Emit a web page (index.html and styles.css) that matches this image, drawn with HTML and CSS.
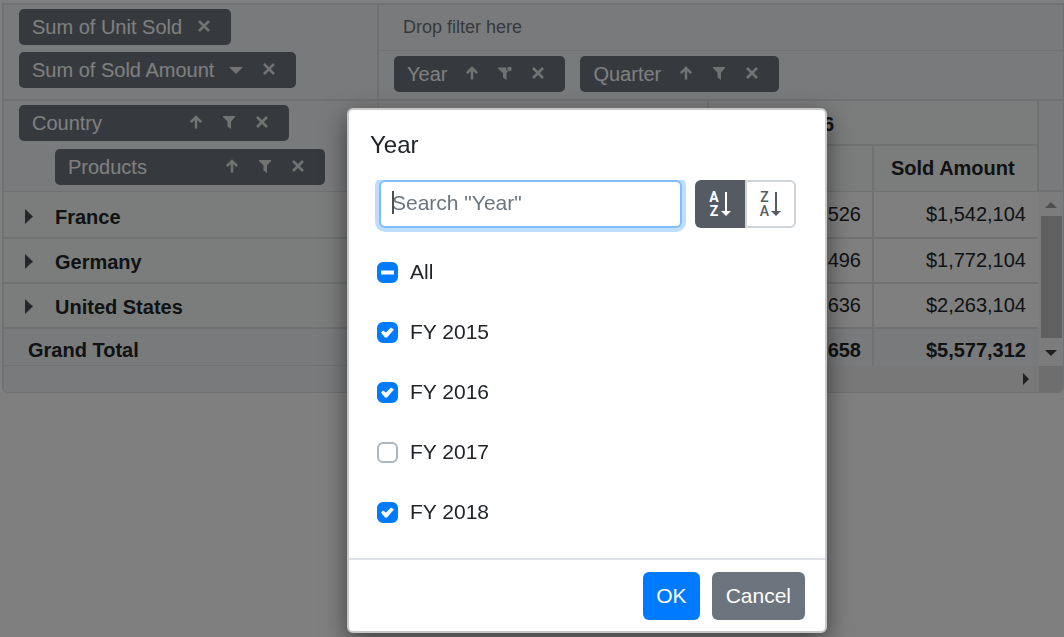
FILE: index.html
```html
<!DOCTYPE html>
<html lang="en">
<head>
    <meta charset="UTF-8">
    <meta name="viewport" content="width=device-width, initial-scale=1.0">
    <title>Pivot Table</title>
    <link rel="stylesheet" href="styles.css">
</head>
<body>
    <!-- ICONS -->
    <svg class="sprite" aria-hidden="true">
        <symbol id="i-close" viewBox="0 0 14 14"><path d="M2 2l10 10M12 2L2 12" fill="none" stroke="currentColor" stroke-width="2.6"/></symbol>
        <symbol id="i-up" viewBox="0 0 14 14"><path d="M7 13.500V2.500M1.800 7.200L7 2l5.200 5.200" fill="none" stroke="currentColor" stroke-width="2.500"/></symbol>
        <symbol id="i-filter" viewBox="0 0 14 14"><path d="M1 1h12v1L9 6.500V14L5.500 11.500V6.500L1 2z" fill="currentColor"/></symbol>
        <symbol id="i-filtered" viewBox="0 0 14 14"><path d="M0 1.500h8.500a2.800 2.800 0 0 0 1.500 4L8.500 7v7L5 11.500V7L0 2.500z" fill="currentColor"/><circle cx="11.500" cy="3" r="2.200" fill="currentColor"/></symbol>
        <symbol id="i-down" viewBox="0 0 14 14"><path d="M0 5h14L7 12z" fill="currentColor"/></symbol>
        <symbol id="i-expand" viewBox="0 0 8 15"><path d="M0 0v15l8-7.500z" fill="currentColor"/></symbol>
        <symbol id="i-sort" viewBox="0 0 10 24"><path d="M5 0v19" stroke="currentColor" stroke-width="2"/><path d="M0 19h10L5 24z" fill="currentColor"/></symbol>
    </svg>

    <main class="pivot">
        <!-- FIELD AREAS -->
        <div class="fields">
            <div class="value-fields">
                <div class="chip">Sum of Unit Sold
                    <span class="chip-actions">
                        <button aria-label="Remove"><svg><use href="#i-close"/></svg></button>
                    </span>
                </div>
                <div class="chip">Sum of Sold Amount
                    <span class="chip-actions">
                        <button aria-label="Options"><svg><use href="#i-down"/></svg></button>
                        <button aria-label="Remove"><svg><use href="#i-close"/></svg></button>
                    </span>
                </div>
            </div>
            <div class="right-fields">
                <div class="filter-fields">Drop filter here</div>
                <div class="column-fields">
                    <div class="chip">Year
                        <span class="chip-actions">
                            <button aria-label="Sort"><svg><use href="#i-up"/></svg></button>
                            <button aria-label="Filter"><svg><use href="#i-filtered"/></svg></button>
                            <button aria-label="Remove"><svg><use href="#i-close"/></svg></button>
                        </span>
                    </div>
                    <div class="chip">Quarter
                        <span class="chip-actions">
                            <button aria-label="Sort"><svg><use href="#i-up"/></svg></button>
                            <button aria-label="Filter"><svg><use href="#i-filter"/></svg></button>
                            <button aria-label="Remove"><svg><use href="#i-close"/></svg></button>
                        </span>
                    </div>
                </div>
            </div>
        </div>

        <!-- DATA -->
        <div class="grid">
            <table>
                <colgroup>
                    <col class="label-col"><col><col><col><col>
                </colgroup>
                <thead>
                    <tr class="years">
                        <td rowspan="2" class="row-fields">
                            <div class="chip wide">Country
                                <span class="chip-actions">
                                    <button aria-label="Sort"><svg><use href="#i-up"/></svg></button>
                                    <button aria-label="Filter"><svg><use href="#i-filter"/></svg></button>
                                    <button aria-label="Remove"><svg><use href="#i-close"/></svg></button>
                                </span>
                            </div>
                            <div class="chip wide nested">Products
                                <span class="chip-actions">
                                    <button aria-label="Sort"><svg><use href="#i-up"/></svg></button>
                                    <button aria-label="Filter"><svg><use href="#i-filter"/></svg></button>
                                    <button aria-label="Remove"><svg><use href="#i-close"/></svg></button>
                                </span>
                            </div>
                        </td>
                        <th colspan="2"></th>
                        <th colspan="2" scope="colgroup">FY 2016</th>
                    </tr>
                    <tr class="measures">
                        <th></th>
                        <th></th>
                        <th></th>
                        <th scope="col">Sold Amount</th>
                    </tr>
                </thead>
                <tbody>
                    <tr class="first">
                        <th scope="row"><svg><use href="#i-expand"/></svg>France</th>
                        <td></td><td></td><td>526</td><td>$1,542,104</td>
                    </tr>
                    <tr>
                        <th scope="row"><svg><use href="#i-expand"/></svg>Germany</th>
                        <td></td><td></td><td>496</td><td>$1,772,104</td>
                    </tr>
                    <tr>
                        <th scope="row"><svg><use href="#i-expand"/></svg>United States</th>
                        <td></td><td></td><td>636</td><td>$2,263,104</td>
                    </tr>
                    <tr class="total">
                        <th scope="row">Grand Total</th>
                        <td></td><td></td><td>658</td><td>$5,577,312</td>
                    </tr>
                </tbody>
            </table>
            <div class="side">
                <div class="side-head"></div>
                <div class="scroll-y">
                    <div class="arrow-up"></div>
                    <div class="thumb"></div>
                    <div class="arrow-down"></div>
                </div>
            </div>
        </div>
        <div class="bottom">
            <div class="bottom-label"></div>
            <div class="scroll-x"><div class="arrow-right"></div></div>
            <div class="corner"></div>
        </div>
    </main>

    <div class="overlay"></div>

    <!-- MEMBER FILTER DIALOG -->
    <div class="dialog" role="dialog" aria-modal="true" aria-labelledby="dialogTitle">
        <h2 id="dialogTitle">Year</h2>
        <div class="dialog-body">
            <div class="search-row">
                <div class="search">
                    <input type="text" placeholder='Search "Year"' aria-label="Search Year">
                </div>
                <div class="sort-group">
                    <button class="active" aria-label="Sort ascending">
                        <span class="letters"><span>A</span><span>Z</span></span><svg><use href="#i-sort"/></svg>
                    </button>
                    <button aria-label="Sort descending">
                        <span class="letters"><span>Z</span><span>A</span></span><svg><use href="#i-sort"/></svg>
                    </button>
                </div>
            </div>
            <div class="members">
                <label><input type="checkbox" class="mixed">All</label>
                <label><input type="checkbox" checked>FY 2015</label>
                <label><input type="checkbox" checked>FY 2016</label>
                <label><input type="checkbox">FY 2017</label>
                <label><input type="checkbox" checked>FY 2018</label>
            </div>
        </div>
        <div class="dialog-footer">
            <button class="btn primary">OK</button>
            <button class="btn">Cancel</button>
        </div>
    </div>
</body>
</html>
```
FILE: styles.css
```css
* { box-sizing: border-box; }
body {
    margin: 0;
    font-family: "Liberation Sans", Arial, sans-serif;
    font-size: 20px;
    line-height: 24px;
    color: #212529;
    background: #fff;
    min-height: 100vh;
}
button { font: inherit; cursor: pointer; }
.sprite { display: none; }

/* Pivot */
.pivot {
    margin: 3px 0 0 2px;
    border: 2px solid #dee2e6;
    border-width: 2px 1px 1px 2px;
    border-radius: 0 0 6px 6px;
    overflow: hidden;
}
.fields {
    display: grid;
    grid-template-columns: 375px 1fr;
    background: #f3f4f7;
    border-bottom: 2px solid #dee2e6;
}
.value-fields {
    display: flex;
    flex-direction: column;
    align-items: flex-start;
    gap: 7px;
    padding: 4px 15px 11px;
    border-right: 2px solid #dee2e6;
}
.filter-fields {
    height: 46px;
    padding: 10px 24px;
    font-size: 18px;
    color: #6c757d;
    border-bottom: 1px solid #dee2e6;
}
.column-fields { display: flex; gap: 15px; padding: 5px 15px 0; }

.chip {
    display: inline-flex;
    align-items: center;
    justify-content: space-between;
    gap: 5px;
    height: 36px;
    padding: 0 11px 0 13px;
    border-radius: 5px;
    background: #6c757d;
    color: #fff;
}
.column-fields .chip { gap: 8px; }
.chip.wide { display: flex; width: 270px; }
.chip.nested { margin: 8px 0 0 36px; }
.chip-actions { display: flex; }
.chip-actions button {
    width: 33px;
    height: 36px;
    padding: 0 0 3px;
    border: 0;
    background: none;
    color: #e4e5e7;
}
.chip-actions svg { display: block; width: 14px; height: 14px; margin: 0 auto; }

/* Grid */
.grid { display: flex; }
table {
    flex: 1;
    width: 100%;
    table-layout: fixed;
    border-collapse: separate;
    border-spacing: 0;
}
.label-col { width: 375px; }
th, td {
    padding: 0 11px;
    border: solid #dee2e6;
    border-width: 0 2px 2px 0;
    text-align: right;
}
th { background: #f7faf8; font-weight: bold; }
thead th { text-align: left; padding: 0 0 2px 17px; }
.years { height: 45px; }
.years th { padding: 2px 0 0 50px; }
.measures { height: 46px; }
.measures th { border-bottom-width: 1px; }
.row-fields {
    padding: 4px 15px 6px;
    text-align: left;
    vertical-align: top;
    background: #f3f4f7;
    border-width: 0 1px 1px 0;
}
tbody tr { height: 45px; }
tbody .first { height: 47px; }
tbody td { padding-bottom: 2px; }
tbody th { padding: 2px 0 0 51px; text-align: left; border-right-width: 1px; }
tbody .first th { padding-top: 4px; }
tbody th svg {
    float: left;
    width: 8px;
    height: 15px;
    margin: 4px 0 0 -30px;
    color: #495057;
}
tbody td:last-child { border-right-color: #fff; }
tbody .total { height: 37px; }
.total th, .total td { background: #f1f4f8; border-bottom: 0; font-weight: bold; }
tbody .total td { padding-top: 5px; padding-bottom: 0; }
tbody .total th { padding: 5px 0 0 24px; border-bottom: 1px solid #dee2e6; }
tbody .total td:last-child { border-right-color: #f1f4f8; }

/* Scrollbars */
.side { display: flex; flex-direction: column; flex: none; width: 24px; }
.side-head { height: 91px; background: #f3f4f7; border-bottom: 2px solid #dee2e6; }
.scroll-y {
    flex: 1;
    display: flex;
    flex-direction: column;
    align-items: center;
    background: #f8f8f8;
}
.thumb { flex: 1; width: 21px; margin: 8px 0 12px; background: #c1c1c1; }
.arrow-up, .arrow-down { border: solid transparent; border-width: 0 6px; }
.arrow-up { margin-top: 10px; border-bottom: 6px solid #a0a0a0; }
.arrow-down { margin-bottom: 10px; border-top: 6px solid #404040; }
.bottom { display: flex; height: 26px; }
.bottom-label { width: 375px; background: #f3f4f7; }
.scroll-x {
    flex: 1;
    display: flex;
    align-items: center;
    justify-content: flex-end;
    padding-right: 10px;
    background: #f1f1f1;
}
.arrow-right { border: solid transparent; border-width: 6px 0; border-left: 6px solid #404040; }
.corner { width: 24px; background: #dcdcdc; }

/* Dialog */
.overlay { position: fixed; inset: 0; background: rgba(0, 0, 0, 0.5); }
.dialog {
    position: absolute;
    top: 108px;
    left: 347px;
    width: 480px;
    border: 2px solid #c8c8c8;
    border-radius: 6px;
    background: #fff;
    box-shadow: 0 8px 24px rgba(0, 0, 0, 0.5);
    font-size: 21px;
}
.dialog h2 { margin: 0; padding: 20px 21px; font-size: 24px; line-height: 30px; font-weight: normal; }
.dialog-body { padding: 0 29px 16px 26px; overflow: hidden; }
.search-row { display: flex; gap: 13px; padding-left: 4px; }
.search { flex: 1; position: relative; }
.search::before {
    content: "";
    position: absolute;
    top: 11px;
    left: 13px;
    width: 2px;
    height: 23px;
    background: #495057;
}
.search input {
    display: block;
    width: 100%;
    height: 48px;
    padding: 0 11px 2px;
    border: 2px solid #80bdff;
    border-radius: 6px;
    box-shadow: 0 0 0 4px #bfdeff;
    font: inherit;
    outline: none;
}
.search input::placeholder { color: #6c757d; }
.sort-group { display: flex; }
.sort-group button {
    display: flex;
    align-items: center;
    justify-content: center;
    gap: 2px;
    width: 49px;
    height: 48px;
    padding: 0;
    border: 2px solid #ced4da;
    border-left: 0;
    border-radius: 0 6px 6px 0;
    background: #fff;
    color: #545b62;
}
.sort-group .active {
    width: 52px;
    border: 0;
    border-right: 2px solid #ced4da;
    border-radius: 6px 0 0 6px;
    background: #545b62;
    color: #fff;
}
.sort-group svg { width: 10px; height: 24px; }
.letters {
    display: flex;
    flex-direction: column;
    font: 500 14px/14px Roboto, sans-serif;
}
.active .letters { font-weight: bold; }
.members { padding: 14px 0 0 2px; }
.members label { display: flex; align-items: center; gap: 12px; height: 60px; line-height: 26px; }
.members input {
    appearance: none;
    width: 21px;
    height: 21px;
    margin: 0;
    border: 2px solid #adb5bd;
    border-radius: 6px;
    background: #fff;
}
.members .mixed, .members input:checked { border-color: #007bff; background: #007bff; }
.members .mixed::before, .members input:checked::before {
    content: "";
    display: block;
    width: 17px;
    height: 17px;
    background: #fff;
}
.members .mixed::before { clip-path: inset(7px 2px 6px 2px); }
.members input:checked::before {
    clip-path: polygon(2px 9px, 4px 7px, 7px 9px, 12px 4px, 15px 6px, 8px 14px, 6px 14px);
}
.dialog-footer {
    display: flex;
    justify-content: flex-end;
    gap: 12px;
    padding: 12px 20px 11px;
    border-top: 2px solid #dee2e6;
}
.btn {
    height: 48px;
    padding: 0 14px;
    border: 0;
    border-radius: 6px;
    background: #6c757d;
    color: #fff;
}
.btn.primary { padding: 0 13px; background: #007bff; }
```
